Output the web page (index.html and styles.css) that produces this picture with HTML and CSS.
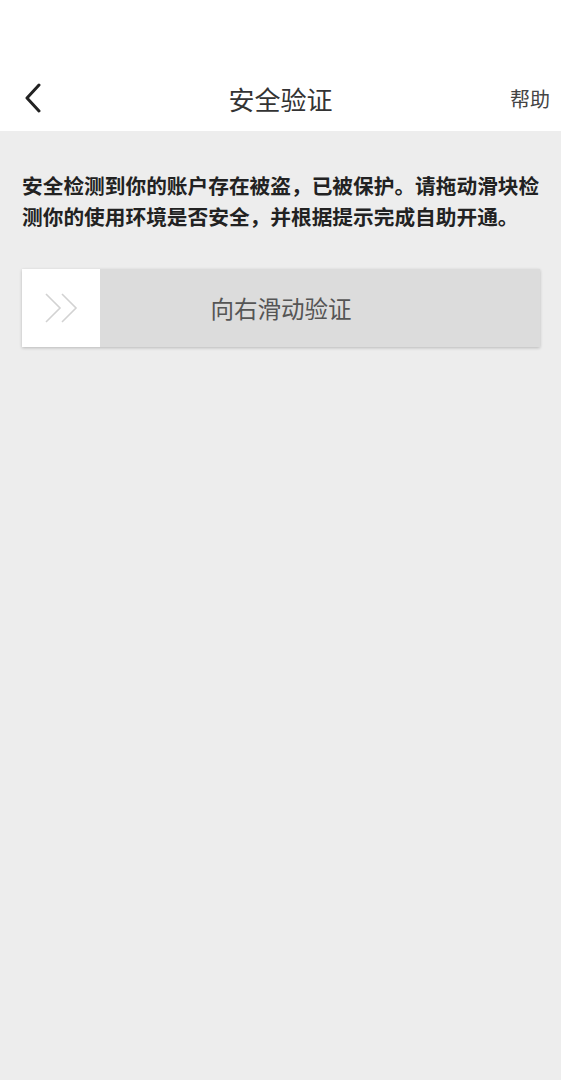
FILE: index.html
```html
<!DOCTYPE html>
<html lang="zh-CN">
<head>
<meta charset="utf-8">
<title>安全验证</title>
<link rel="stylesheet" href="styles.css">
</head>
<body>
<header class="header">
  <div class="nav">
    <a class="back" aria-label="返回">
      <svg width="18" height="30" viewBox="0 0 18 30"><polyline points="15,2 3,15 15,28" fill="none" stroke="#222" stroke-width="3" stroke-linecap="round" stroke-linejoin="round"/></svg>
    </a>
    <h1 class="title">安全验证</h1>
    <a class="help">帮助</a>
  </div>
</header>
<main class="content">
  <p class="notice">安全检测到你的账户存在被盗，已被保护。请拖动滑块检测你的使用环境是否安全，并根据提示完成自助开通。</p>
  <div class="slider">
    <div class="knob">
      <svg width="34" height="30" viewBox="0 0 34 30"><polyline points="2,1 16,15 2,29" fill="none" stroke="#d2d2d2" stroke-width="1.6"/><polyline points="18,1 32,15 18,29" fill="none" stroke="#d2d2d2" stroke-width="1.6"/></svg>
    </div>
    <span class="slider-text">向右滑动验证</span>
  </div>
</main>
</body>
</html>
```

FILE: styles.css
```css
html, body {
  margin: 0;
  padding: 0;
}
body {
  background: #ededed;
  font-family: "Noto Sans CJK SC", "Noto Sans", sans-serif;
  width: 561px;
  min-height: 1080px;
}
.header {
  background: #ffffff;
  padding-top: 65px;
  height: 66px;
}
.nav {
  height: 66px;
  display: flex;
  align-items: center;
  justify-content: space-between;
  padding: 0 11px 0 24px;
  position: relative;
}
.back {
  display: flex;
  align-items: center;
  height: 30px;
}
.title {
  position: absolute;
  left: 0;
  right: 0;
  text-align: center;
  margin: 0;
  font-size: 26px;
  font-weight: 400;
  color: #333;
  pointer-events: none;
}
.help {
  font-size: 20px;
  color: #444;
}
.content {
  padding: 0 21px 0 22px;
}
.notice {
  margin: 39px 0 0;
  font-size: 20.7px;
  line-height: 31px;
  font-weight: 700;
  color: #222;
  letter-spacing: 0;
}
.slider {
  margin-top: 37px;
  height: 78px;
  background: #dcdcdc;
  display: flex;
  align-items: center;
  position: relative;
  box-shadow: 0 1px 3px rgba(0, 0, 0, 0.22);
}
.knob {
  width: 78px;
  height: 78px;
  background: #ffffff;
  display: flex;
  align-items: center;
  justify-content: center;
  position: relative;
  z-index: 1;
}
.slider-text {
  position: absolute;
  left: 0;
  right: 0;
  text-align: center;
  font-size: 23.5px;
  color: #555;
}
```
